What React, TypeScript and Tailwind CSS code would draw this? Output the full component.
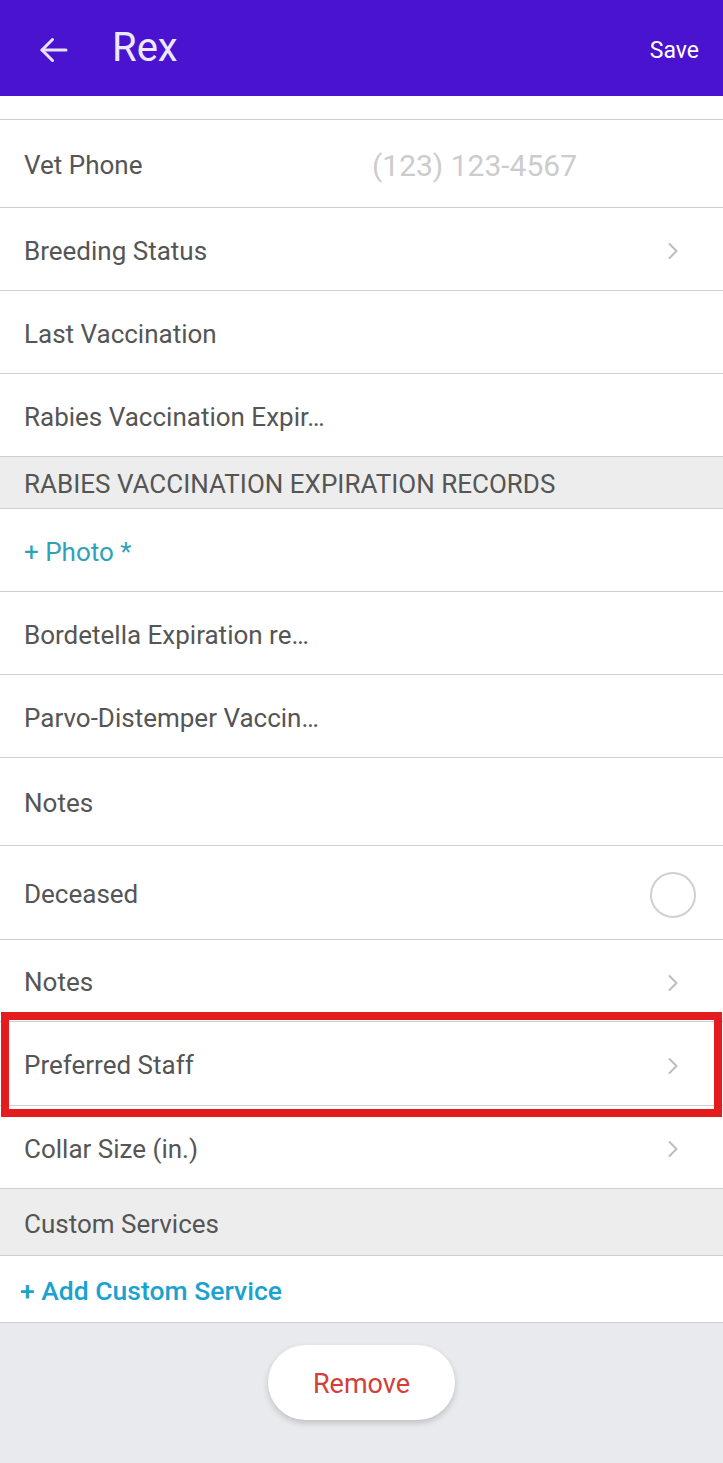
import { ChevronRight } from "lucide-react";

type RowProps = {
  label: string;
  h: string;
  right?: "chevron" | "circle";
};

function Row({ label, h, right }: RowProps) {
  return (
    <div className={`flex items-center justify-between border-b border-[#cfcfcf] bg-white pl-6 pr-9 pt-1 ${h}`}>
      <span className="text-[26px] text-[#555]">{label}</span>
      {right === "chevron" && <ChevronRight className="h-7 w-7 text-[#bdbdbd]" strokeWidth={1.75} />}
      {right === "circle" && (
        <div className="-mr-[9px] h-[46px] w-[46px] rounded-full border-2 border-[#d0d0d0]" />
      )}
    </div>
  );
}

export default function App() {
  return (
    <div className="relative min-h-[1463px] w-[723px] bg-[#e9eaee] font-['Roboto',sans-serif]">
      <header className="flex h-[96px] items-center justify-between bg-[#4a13cf] pl-9 pr-6 text-white">
        <div className="flex items-center gap-[40px]">
          <svg width="36" height="36" viewBox="0 0 24 24" fill="none" stroke="#e8e2ff" strokeWidth="2" strokeLinecap="round" strokeLinejoin="round" className="mt-1">
            <path d="M20 12H4" />
            <path d="M11 5l-7 7 7 7" />
          </svg>
          <span className="text-[40px] leading-none text-[#ece8ff]">Rex</span>
        </div>
        <span className="mt-[6px] text-[23px]">Save</span>
      </header>
      <div className="h-[24px] border-b border-[#cfcfcf] bg-white" />
      <div className="flex h-[88px] items-center border-b border-[#cfcfcf] bg-white pl-6 pt-1">
        <span className="w-[348px] text-[26px] text-[#555]">Vet Phone</span>
        <span className="text-[30px] text-[#cccccc]">(123) 123-4567</span>
      </div>
      <Row label="Breeding Status" h="h-[83px]" right="chevron" />
      <Row label="Last Vaccination" h="h-[83px]" />
      <Row label="Rabies Vaccination Expir…" h="h-[83px]" />
      <div className="flex h-[52px] items-center border-b border-[#cfcfcf] bg-[#ededed] pl-6 pt-1">
        <span className="text-[26px] text-[#555]">RABIES VACCINATION EXPIRATION RECORDS</span>
      </div>
      <div className="flex h-[83px] items-center border-b border-[#cfcfcf] bg-white pl-6 pt-1">
        <span className="text-[26px] text-[#2fa2b8]">+ Photo *</span>
      </div>
      <Row label="Bordetella Expiration re…" h="h-[83px]" />
      <Row label="Parvo-Distemper Vaccin…" h="h-[83px]" />
      <Row label="Notes" h="h-[88px]" />
      <Row label="Deceased" h="h-[94px]" right="circle" />
      <Row label="Notes" h="h-[82px]" right="chevron" />
      <Row label="Preferred Staff" h="h-[84px]" right="chevron" />
      <Row label="Collar Size (in.)" h="h-[83px]" right="chevron" />
      <div className="flex h-[67px] items-center border-b border-[#cfcfcf] bg-[#ededed] pl-6 pt-1">
        <span className="text-[26px] text-[#555]">Custom Services</span>
      </div>
      <div className="flex h-[67px] items-center border-b border-[#cfcfcf] bg-white pl-5 pt-1">
        <span className="text-[26.5px] font-medium text-[#1ba2cf]">+ Add Custom Service</span>
      </div>
      <div className="flex justify-center pt-[22px]">
        <button className="flex h-[75px] w-[187px] items-center justify-center rounded-full bg-white pt-1 text-[27px] text-[#d2403a] shadow-[0_3px_6px_rgba(0,0,0,0.18)]">
          Remove
        </button>
      </div>
      <div className="absolute left-[1px] top-[1012px] h-[105px] w-[721px] border-[8px] border-[#e51c1e]" />
    </div>
  );
}
